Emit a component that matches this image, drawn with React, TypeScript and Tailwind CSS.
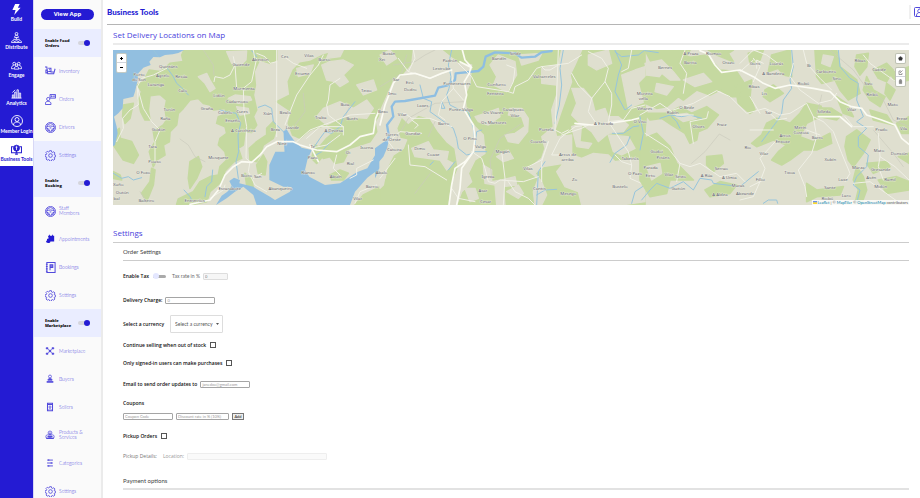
import type { ReactNode } from "react";
import clsx from "clsx";

type Label = [number, number, string];

type Tile = {
  x: number;
  y: number;
  green: string;
  beige: string;
  water: string;
  rivers: string;
  wideRiver: string;
  lines: string;
  roads: string;
  mainRoads: string;
  labels: Label[];
};

const tiles: Tile[] = [
  {
    x: -9,
    y: -15,
    green:
      "M222 15H440L446 50 432 80 436 120 430 150 440 195 430 215 440 240 425 262 405 260 400 300 385 310 395 340 372 350 345 378 335 410 300 440 290 470 240 480 200 478 205 462 250 440 270 410 300 395 325 390 330 365 350 345 345 320 325 300 330 280 350 265 345 245 320 235 325 215 350 205 345 190 310 195 300 180 280 175 265 160 240 165 220 190 205 205 200 240 180 260 178 290 160 300 165 330 140 345 130 365 118 320 135 290 130 260 160 240 170 225 165 190 170 165 150 148 120 152 115 195 120 225 105 225 92 200 85 165 95 140 82 120 100 110 118 75 150 80 165 70 180 55 220 50 215 30ZM440 15H500L500 45 480 55 450 45ZM500 170L540 150 535 110 550 75 570 55 600 50 640 30 700 15H810V205L795 230 800 260 780 290 720 310 680 330 640 340 625 310 650 280 680 255 650 240 600 255 570 280 548 270 535 235 545 200ZM418 310L440 290 470 270 470 250 490 230 500 250 490 280 460 300 450 330 440 350 420 345ZM440 360L460 330 470 350 465 390 445 385ZM15 260L28 250 30 280 65 290 85 330 70 355 40 345 10 300ZM40 180L70 175 60 220 45 235 38 215ZM95 445L120 410 125 370 135 375 130 420 110 470ZM240 350L265 335 275 365 260 400 240 430 235 400ZM660 390L690 375 715 385 700 405 665 405ZM810 425V480H735L760 450ZM10 380L30 390 35 405 10 400ZM615 300L650 320 620 355 605 340ZM405 385L425 400 430 430 410 420ZM660 335L715 320 700 350 675 355Z",
    beige:
      "M265 95L290 85 300 105 315 130 300 140 285 115ZM350 20L410 18 408 45 390 62 365 55ZM635 60L660 50 700 45 730 60 700 90 715 110 690 125 675 110 650 105ZM640 190L690 170 730 190 770 165 790 190 770 220 700 215 650 240 620 215ZM355 160L375 150 420 155 425 165 385 175ZM380 185L415 190 418 205 390 210ZM560 70L610 60 600 85 565 95ZM660 15L700 15 690 35 650 40ZM740 120L790 105 800 135 760 150Z",
    water:
      "M0 15H222L205 24 188 28 165 30 150 37 130 36 118 50 122 60 100 68 85 85 82 110 75 140 70 155 40 162 38 190 25 205 12 215 20 245 23 265 15 300 0 310ZM318 480L335 452 352 440 365 422 358 408 372 398 390 405 388 415 430 425 440 432 480 455 495 465 540 440 545 426 520 425 478 405 478 360 496 320 527 320 530 290 524 262 528 250 540 270 555 290 575 308 605 315 592 345 585 375 598 395 645 420 690 415 740 382 772 370 810 305V370L772 398 735 440 720 480H440L430 450 400 425 375 440 350 460Z",
    rivers:
      "M130 15L145 35M172 70L190 95 200 115 215 128 235 150M330 195L350 200 378 205 392 235 384 270 386 320 378 350 385 400M445 187L465 180 485 190 490 230 510 250 525 265M735 170L700 215 690 245 665 265 645 260 630 280 610 310M662 290L635 320 618 330M10 385L35 400 55 395 70 405 95 398M308 375L305 410 290 425 285 455M222 435L240 455 248 470M810 330L800 360M425 17L440 35",
    wideRiver: "M527 320L524 260",
    lines:
      "M210 282L235 300 255 335 285 350M280 15L310 60 312 90M580 145L585 200 555 240M720 180L700 230M90 440L110 470",
    roads:
      "M170 70L130 90 95 100 82 125 85 180 60 195 38 220 40 250 20 290M82 125L100 190 125 230 150 255 135 290 135 350M312 110L315 95 340 100 360 90 375 60 370 35M440 40L425 110 400 130 402 200 410 245 408 340 420 350M500 15V275M500 50L480 55 465 35 440 25M625 60L600 90 560 150 540 200 525 240M640 30L625 60M515 30L550 55 590 70M690 100L660 120 655 165 650 180 655 210 700 245 700 270M560 290L600 255 720 210 795 205M600 310L650 300 690 270M680 330L670 370 690 390M420 350L415 380 435 420 470 440M430 400L455 385M700 245L630 245 590 280M800 420L750 440 735 475M720 400L740 390 740 370 790 345M430 15L435 45M375 60L380 130 405 135M300 460L340 435 345 420",
    mainRoads:
      "M240 478L300 465 325 435 345 390 370 365 395 350 425 352 450 330 470 305 500 290 550 290 570 300 620 315 680 320 720 300 750 275 790 265 797 220 810 190M600 300L625 350",
    labels: [
      [175, 70, "Quintáns"], [87, 93, "Porto"], [87, 108, "do Son"], [158, 97, "Agrelo"], [214, 99, "Resúa"],
      [138, 123, "Laranga"], [218, 140, "Calo"], [327, 155, "Lidón"], [402, 136, "Mormenta"], [381, 175, "Cadarnoxo"],
      [291, 194, "Graña"], [178, 199, "Torón"], [166, 226, "Raña"], [146, 258, "Godón"], [345, 207, "Cubelo"],
      [396, 203, "Cures"], [368, 232, "Enseño"], [400, 261, "A Curicheira"], [128, 308, "Tara"], [134, 354, "Pouso"],
      [325, 342, "Mosquete"], [100, 388, "O Foxo"], [25, 424, "Xuño"], [37, 446, "Outón"], [20, 466, "bal"],
      [109, 472, "Balteiro"], [254, 471, "Entrerríos"], [359, 435, "Escarabote"], [409, 395, "Boiro"], [443, 398, "San"],
      [511, 434, "Abanqueiro"], [393, 62, "Guiende"], [451, 48, "Abeixón"], [524, 40, "Ces"], [597, 35, "Vilas"],
      [643, 49, "Burso"], [577, 90, "Eriume"], [769, 140, "Teixo"], [705, 183, "Buia"], [473, 210, "Xián"],
      [526, 206, "Bealo"], [632, 221, "Traba"], [726, 225, "Burés"], [496, 257, "Brea"], [547, 251, "Luvide"],
      [671, 262, "A Devesa"], [516, 300, "Nine"], [608, 308, "Te"], [608, 343, "Pazo"], [770, 313, "Isorna"],
      [714, 328, "Oi"], [721, 361, "Rial"], [594, 386, "Rianxo"], [677, 398, "Abuín"], [786, 430, "Barrio"], [743, 464, "Vilar"],
    ],
  },
  {
    x: 786,
    y: -15,
    green:
      "M15 15H810V480H15V430L35 400 45 340 25 310 15 200Z",
    beige:
      "M15 200L55 110 85 90 110 60 115 15H200L250 55 290 60 285 115 270 150 275 210 300 245 325 270 330 325 300 345 280 385 290 410 260 440 245 480H222L230 420 250 370 240 310 215 290 190 260 165 220 130 210 100 235 80 215 65 250 75 280 95 285 85 310 55 330 35 370 25 420 15 430 15 290ZM345 60L370 30 420 50 425 90 395 140 355 120 365 95ZM500 70L550 60 560 15H620L600 60 585 90 590 110 555 210 540 255 545 275 590 270 590 330 620 340 655 325 700 330 720 350 780 340 810 360V470L740 480H620L610 440 570 425 545 380 565 355 505 365 480 385 500 410 515 450 500 480H480L475 440 490 400 455 375 500 340 510 310 500 275 535 245 530 195 545 150 545 120 500 115ZM390 270L420 265 450 245 440 215 400 210 405 190 440 190 460 220 458 260 430 295 400 290ZM590 130L625 130 650 160 660 200 690 190 700 215 730 215 760 240 745 260 700 265 670 290 650 260 610 230 590 210 605 175ZM590 245L620 235 615 290 650 295 640 310 605 305ZM640 30L700 15 710 55 665 75 640 60ZM740 90L780 75 810 65V170L760 190 750 140ZM330 205L370 190 375 215 340 240 310 230 300 215ZM365 335L400 315 415 340 385 350ZM325 360L350 375 350 410 380 405 420 395 425 420 385 425 390 480H365L360 420 330 415ZM110 310L160 290 175 315 220 320 215 345 235 355 215 375 195 345 120 335ZM15 30L45 15 65 40 35 60ZM430 30L500 25 490 45 440 60ZM270 430L300 430 310 460 285 470ZM700 270L760 275 780 310 740 330 715 320ZM395 440L430 420 445 445 430 460Z",
    water:
      "M0 310L25 292 42 285 36 310 25 335 12 350 10 380 0 400Z",
    rivers:
      "M230 15L220 60 228 95 222 130 215 150 225 180 255 195 280 200 295 250 300 290M135 120L145 160 170 170 165 200 200 225 235 250 245 280 250 310 275 330 295 325M320 255L305 260 300 300M200 170L210 190 200 190ZM565 15L555 70 560 120 553 180 540 235M720 15L740 60 730 90 720 140 750 195 770 180M810 15L790 30 740 35 720 20M712 265L745 265 775 245 810 240M510 350L490 380 485 480M485 450L510 435 545 433M705 352L720 325 755 300 765 275M810 420L780 440 770 475M220 375L240 350M175 350L165 360M335 320L300 320",
    wideRiver:
      "M30 295L42 275 36 240 55 215 50 185 60 170 90 168 180 152 190 128 215 122 240 105 242 85 310 78 325 65 332 35 360 22 420 25 440 38 480 35 500 22 530 18",
    lines:
      "M55 60L85 55 120 50 150 30 180 15M15 125L80 85 95 30M350 400L345 345 375 280 440 235M170 380L120 445M265 170L180 175 100 220 60 290M180 230L160 275",
    roads:
      "M250 55L290 95 305 125 400 140 415 145 420 125 460 105 485 70 500 65 510 75 525 75 550 60M395 60L420 70 415 110 400 140M70 40L100 80 165 100 230 75M230 75L235 130 200 170 190 210 210 225M235 130L265 165M110 225L130 240 120 250M70 210L90 205 110 220 165 220 230 245M55 310L40 290 75 260 140 265M100 300L105 360 150 365 215 405M15 400L60 340M290 320L320 340 330 370 340 410 360 415 375 405 445 410 490 395M380 320L390 400 385 480M400 410L420 440 460 460 480 480M540 255L545 150 550 15M540 255L560 265 570 260 580 255M500 65L580 55 620 30M590 85L610 120 650 160 690 110 700 70 680 40 640 20M690 110L710 145 710 180 700 230M650 160L640 200 660 230M640 240L600 245 555 280 530 330 600 330M700 230L720 260 760 320 770 360M520 290L500 350 500 410M520 290L500 345 450 370M720 330L740 350 770 360 765 400 810 420M700 230L745 225 770 190 810 180M640 240L620 250 560 270M770 15L760 70 740 80M230 430L250 460 300 470M115 15L120 40 100 80",
    mainRoads:
      "M15 240L30 180 55 115 75 90 120 85 165 100 200 85 230 75M262 15L270 45 288 65 283 85 268 110 275 150 265 190 295 240 300 280 295 320 270 350 240 370 230 420 222 480M295 320L260 370 255 430 245 480M255 50L290 68M600 235L650 240 700 235 770 225 810 215",
    labels: [
      [42, 29, "Buxán"], [21, 47, "Xei"], [225, 52, "Padrón"], [200, 76, "Lestrobe"], [372, 45, "Bandín"], [421, 30, "Sinde"],
      [64, 108, "Sar"], [104, 116, "Eiró"], [106, 138, "Dodro"], [52, 151, "Imo"], [246, 120, "Pontecesures"],
      [365, 124, "Confurco"], [361, 151, "Fenteira"], [508, 100, "Valcarceles"], [143, 186, "Laxes"], [24, 204, "Bexo"],
      [82, 212, "Vilar"], [258, 197, "Ponte Valga"], [355, 207, "Os Viiares"], [415, 199, "Casalpuxo"], [420, 217, "Vilar"],
      [356, 238, "Os Martores"], [206, 240, "Barro"], [514, 259, "Portela"], [686, 241, "A Estrada"], [795, 235, "O Viso"],
      [114, 271, "Gondar"], [50, 274, "Torres"], [50, 289, "de Oeste"], [285, 284, "O Pino"], [317, 308, "Valga"],
      [58, 317, "Catoira"], [134, 316, "Dimo"], [175, 332, "Coaxe"], [383, 324, "Magán"], [490, 294, "Couselo"],
      [578, 332, "Arcos de"], [578, 347, "arriba"], [765, 344, "Tabeirós"], [459, 374, "Vilas"], [20, 388, "Abalo"],
      [780, 389, "O Pazo"], [339, 399, "Igrexa"], [599, 409, "Zo"], [735, 429, "Bustelo"], [493, 436, "Cuntis"],
      [324, 442, "Asar"], [580, 450, "Mesego"], [332, 475, "Cesar"],
    ],
  },
  {
    x: 1581,
    y: -150,
    green:
      "M15 150H150L135 175 165 170 200 165 240 210 290 215 310 245 300 290 270 290 240 270 210 285 170 270 130 300 115 290 80 320 50 325 15 310 0 250 20 230 60 235 75 215 40 200ZM110 175L130 165 175 180 160 210 120 200ZM205 150L230 165 280 185 265 160 280 150ZM285 260L335 240 330 290 345 330 330 340 295 310ZM375 270L400 255 430 280 390 305 370 290ZM395 165L450 150 455 230 430 225 415 205 385 215 390 190ZM525 150H590L600 200 650 240 660 280 625 300 600 270 585 240 545 250 530 230ZM500 310L575 325 605 345 590 360 540 350 500 370 480 410 520 425 570 400 575 430 530 450 490 450 450 480 425 495 395 480 415 455 440 435 400 420 350 440 335 430 365 405 380 370 410 355 450 370 480 340ZM85 340L120 320 155 340 200 320 235 345 200 385 175 395 170 420 150 430 135 400 95 375 65 355 30 360 15 340ZM0 420L50 400 90 440 110 490 160 540 90 540 80 580 30 590 0 540ZM200 470L245 465 250 490 220 515 200 495ZM195 570L240 545 290 555 270 580 210 590ZM650 165L685 160 680 200 660 225 645 200ZM700 210L740 190 760 210 740 245 715 235ZM680 230L700 270 735 290 720 320 690 300 670 270ZM620 410L650 390 690 420 670 460 640 500 625 480 615 440ZM650 500L670 530 680 570 665 610H645L655 570 640 540ZM680 490L740 485 750 500 700 520ZM715 540L770 530 807 545V570L740 580ZM775 470L807 460V490ZM750 220L807 200V240L770 250ZM690 330L740 345 760 375 700 360ZM500 550L530 570 610 560 600 585 530 590 500 605ZM325 160L370 150 360 180 330 190ZM590 290L620 310 640 350 610 340ZM770 370L807 350V400L785 400ZM0 330L20 335 15 390 0 400ZM740 250L765 270 750 300 735 280Z",
    beige:
      "M15 190L65 180 100 215 120 240 90 240 60 215 20 215ZM130 240L190 220 215 245 165 260ZM100 345L140 340 170 355 130 365ZM540 290H570V320H548ZM20 500L60 490 65 520 35 540ZM550 165L580 170 570 200 545 190ZM50 250L100 260 80 285 45 275Z",
    water: "",
    rivers:
      "M15 152L55 158M60 355L90 345 125 350 150 345 185 355M95 350L110 365 120 385M455 150L460 200 450 240 455 265 430 300 425 340 410 365 365 425M595 150L600 200 630 235 655 250 650 300 670 350 650 365 680 385 655 410 655 440 685 465 680 500 650 530 640 555 660 570 650 610M5 600L30 570 50 550 90 565 130 545 160 570 180 535 215 540 220 550 300 560 330 535 355 515M0 350L10 400 0 450M370 610L385 600 410 600 413 610",
    wideRiver: "",
    lines:
      "M270 420L238 402 195 455 155 490M570 150L640 210 680 265 730 300 760 360 807 380M700 390L760 460 790 500M545 285L530 350",
    roads:
      "M100 330L160 310 230 272 270 290 320 340 375 325 420 345 450 340 500 310 520 350 550 365M380 330L410 360 440 355M460 190L450 230 480 270 535 310 575 300 590 280M490 150L500 190 540 235 575 270M340 175L360 200 340 245M300 190L340 150 380 165 420 195M300 215L340 180M135 150L120 190 140 220 130 280M15 400L85 445 120 490 150 500 180 490 240 530 290 520 315 545M160 430L150 365 200 355 205 335M410 420L360 475 375 505 360 545 340 590 300 600M550 365L580 395 605 460 630 520 615 545M520 350L530 410 515 460 475 510 495 560 500 590M615 350L640 380 700 380M715 400L720 470 715 500 730 540M720 470L765 500 807 540M330 390H400M120 490L110 545M640 550L690 545 780 610M670 165L690 190 760 240 790 260M0 345L60 310 110 345 160 345M330 290L360 340M500 390L540 405M350 205L350 180 370 190M330 560L370 540",
    mainRoads:
      "M180 152L205 162 225 195 245 217 300 210 340 230 370 250 405 265 450 255 520 265 570 275 600 305 635 320 665 325 680 345 725 360 765 375 785 415 807 433M570 275L585 290M535 350L600 350 635 380",
    labels: [
      [153, 164, "A Praza"], [221, 164, "Riomao"], [151, 193, "Barcia"], [75, 207, "Bernes"], [265, 191, "Orazo"],
      [345, 195, "Goris"], [409, 194, "Lourás"], [507, 202, "Bi"], [400, 225, "A Bandeira"], [558, 220, "Carboeiro"],
      [591, 240, "Sino"], [660, 186, "Ribas"], [717, 213, "Caxide"], [685, 254, "Sizo"], [342, 265, "Ribas"],
      [373, 285, "Lis"], [490, 256, "Riobó"], [696, 287, "Reibó"], [14, 284, "Moreira"], [10, 299, "vella"],
      [14, 329, "Viñares"], [98, 341, "Rubín"], [140, 328, "O Bede"], [386, 342, "Sar"], [552, 340, "Silleda"],
      [635, 333, "Vilar"], [758, 319, "Mato"], [786, 360, "Erexe"], [175, 384, "Olives"], [245, 379, "Fraiz"],
      [481, 387, "Merín"], [483, 403, "Costoia"], [435, 411, "Arcos"], [428, 430, "Enxoxe"], [532, 416, "Barro"],
      [724, 393, "Prado"], [791, 389, "Vila"], [323, 447, "Rio"], [372, 465, "Vilar"], [571, 483, "Xubín"],
      [717, 456, "Mato"], [778, 465, "Donsión"], [50, 458, "Godoi"], [69, 477, "Picáns"], [32, 506, "Parada"],
      [31, 531, "Eirto"], [87, 529, "Vilar"], [122, 535, "Sesto"], [244, 509, "Serrao"], [200, 532, "A Rúa"],
      [268, 538, "A Umia"], [449, 521, "Tixoa"], [361, 542, "Filloi"], [294, 562, "Muras"], [115, 569, "Guitón"],
      [655, 506, "Marza"], [722, 512, "Gresande"], [694, 536, "Asén"], [750, 542, "Ramil"], [609, 542, "Laxe"],
      [722, 565, "Midón"], [570, 566, "Sante"], [619, 591, "Laro"], [240, 589, "A Aldea"], [315, 584, "Abeande"],
      [562, 599, "Riobó"],
    ],
  },
];

const DeliveryMap = () => {
  return (
    <div className="relative h-[155px] w-full overflow-hidden bg-[#dfdfcf]">
      <svg
        viewBox="0 0 2388 465"
        preserveAspectRatio="xMidYMid slice"
        className="block h-full w-full"
        role="img"
        aria-label="Delivery map"
      >
        {tiles.map((t) => (
          <g key={t.x} transform={`translate(${t.x} ${t.y})`} fill="none" strokeLinejoin="round" strokeLinecap="round">
            <path d={t.green} fill="#c5d9a0" stroke="#c5d9a0" strokeWidth="5" />
            <path d={t.beige} fill="#dfdfcf" stroke="#dfdfcf" strokeWidth="4" />
            <path d={t.water} fill="#92bfe0" />
            <path d={t.lines} stroke="#cacabc" strokeWidth="2" />
            <path d={t.rivers} stroke="#97c5dc" strokeWidth="3" />
            <path d={t.wideRiver} stroke="#8ebee2" strokeWidth="7" />
            <path d={t.roads} stroke="#f0f0e6" strokeWidth="3" />
            <path d={t.mainRoads} stroke="#fbfbf3" strokeWidth="5" />
          </g>
        ))}
        {tiles.map((t) => (
          <g
            key={t.x}
            transform={`translate(${t.x} ${t.y})`}
            className="font-['Noto_Sans',sans-serif] text-[13px]"
            fill="#5d6068"
            stroke="#eeeee4"
            strokeWidth="2"
            paintOrder="stroke"
            textAnchor="middle"
          >
            {t.labels.map(([x, y, name]) => (
              <text key={`${x}-${y}`} x={x} y={y}>
                {name}
              </text>
            ))}
          </g>
        ))}
      </svg>

      {/* zoom */}
      <div className="absolute left-1 top-1 flex w-[9px] flex-col divide-y divide-gray-300 rounded-[1px] bg-white shadow-[0_0_0_1px_#c4cbc4]">
        <button className="flex h-[9px] items-center justify-center" aria-label="Zoom in">
          <svg viewBox="0 0 9 9" className="size-[9px]"><path d="M4.5 3v3M3 4.5h3" stroke="#000" /></svg>
        </button>
        <button className="flex h-[9px] items-center justify-center" aria-label="Zoom out">
          <svg viewBox="0 0 9 9" className="size-[9px]"><path d="M3 4.5h3" stroke="#000" /></svg>
        </button>
      </div>

      {/* draw tools */}
      <div className="absolute right-1 top-1 flex w-[9px] flex-col gap-[5px]">
        <button className="h-[9px] rounded-[1px] bg-white shadow-[0_0_0_1px_#bfc2b4]" aria-label="Draw a polygon">
          <svg viewBox="0 0 9 9" className="size-[9px]"><path d="M4.5 2.5l2 1.4-.7 2.4H3.2l-.7-2.4z" fill="#333" stroke="#333" strokeWidth=".4" /></svg>
        </button>
        <div className="flex flex-col divide-y divide-gray-300 rounded-[1px] bg-white shadow-[0_0_0_1px_#bfc2b4]">
          <button className="h-[9px]" aria-label="Edit layers">
            <svg viewBox="0 0 9 9" className="size-[9px]" fill="none" stroke="#777" strokeWidth=".7"><path d="M5 3H3v3.5h3V5M4 5l2.5-2.5" /></svg>
          </button>
          <button className="h-[9px]" aria-label="Delete layers">
            <svg viewBox="0 0 9 9" className="size-[9px]" fill="#888" stroke="#777" strokeWidth=".6"><path d="M3 3h3M3.3 3.6h2.4v3H3.3zM4 2.5h1" /></svg>
          </button>
        </div>
      </div>

      {/* attribution */}
      <div className="absolute bottom-0 right-0 flex items-center gap-[1px] bg-white/80 px-[1px] text-[4px] leading-[5px] text-[#555]">
        <svg viewBox="0 0 12 8" className="h-[3px] w-1"><path fill="#4C7BE1" d="M0 0h12v4H0z" /><path fill="#FFD500" d="M0 4h12v4H0z" /></svg>
        <a href="#leaflet" className="text-[#0078a8]">Leaflet</a>
        <span>| ©</span>
        <a href="#maptiler" className="text-[#0078a8]">MapTiler</a>
        <span>©</span>
        <a href="#osm" className="text-[#0078a8]">OpenStreetMap</a>
        <span>contributors</span>
      </div>
    </div>
  );
};

const gear = (
  <>
    <circle cx="12" cy="12" r="4" />
    <path d="M10 2h4l.6 3 2 .9 2.600-1.600 2.600 2.700-1.600 2.600.8 2 3 .5v2.800l-3 .7-.9 2 1.600 2.600-2.700 2.600-2.500-1.600-2 .8-.5 3h-4l-.6-3-2-.8-2.500 1.600-2.700-2.700 1.600-2.500-.8-2-3-.6V11l3-.6.8-2-1.600-2.500 2.700-2.700 2.500 1.600 2-.8z" transform="translate(0 -.5)" />
  </>
);

const wheel = (
  <>
    <circle cx="12" cy="12" r="11" />
    <circle cx="12" cy="12" r="8.500" />
    <path d="M3.500 11c4-3 13-3 17 0M4 14c4 0 5 2 5.500 6M20 14c-4 0-5 2-5.500 6M10 13h4" strokeWidth="2" />
  </>
);

const icons: Record<string, ReactNode> = {
  build: <path d="M9 0h10l-4 8h6L7 24l3-11H3z" fill="currentColor" stroke="none" />,
  distribute: (
    <>
      <circle cx="12" cy="4" r="3" />
      <path d="M8 12c0-3 1-5 4-5s4 2 4 5zM12 12v3M5 16h14M1 23c0-3 1-4 3.500-4S8 20 8 23zM8.500 23c0-3 1-4 3.500-4s3.500 1 3.500 4zM16 23c0-3 1-4 3.500-4s3.500 1 3.500 4z" />
    </>
  ),
  engage: (
    <>
      <circle cx="7" cy="8" r="3" />
      <circle cx="17" cy="8" r="3" />
      <circle cx="12" cy="11" r="2.500" />
      <path d="M1 19c0-5 2-7 5-7M23 19c0-5-2-7-5-7M7 20c0-4 2-6 5-6s5 2 5 6zM1 19h5M18 19h5" />
    </>
  ),
  analytics: <path d="M1 22h22M3 22v-7h3v7M8 22V9h3v13M13 22V4h3v18M18 22V11h3v11M3 10l6-6" />,
  login: (
    <>
      <circle cx="12" cy="12" r="11" />
      <circle cx="12" cy="9" r="4" />
      <path d="M5 20c0-4 3-6 7-6s7 2 7 6" />
    </>
  ),
  tools: (
    <>
      <path d="M6 6H1v13h22V6h-5M9 22h6" strokeWidth="2.500" />
      <circle cx="12" cy="9" r="6.500" fill="currentColor" />
      <path d="M12 5v8M10 7h4" stroke="#fff" />
      <path d="M12 15v5" strokeWidth="3" />
    </>
  ),
  inventory: (
    <path d="M0 2h4l2 15h13l3-11M7 5h6v7H7M9 8h2M12 13h9M6 9H2v6h4" strokeWidth="2.200" />
  ),
  orders: (
    <>
      <circle cx="7" cy="11" r="3.500" />
      <path d="M1 23v-3c0-3 3-4 6-4s6 2 6 5v2zM11 1h12v8H11zM14 3v4M20 3v4M16 5h3" strokeWidth="2" />
    </>
  ),
  wheel,
  gear,
  appointments: <path d="M7 4h3V2h2v2h5V2h2v2h3v14h-9c0 4-7 5-10 2-1-2 0-4 2-5-1-3 1-5 4-4z" fill="currentColor" stroke="none" />,
  bookings: <path d="M4 1h18v22H4zM2 5h4M2 10h4M2 15h4M2 20h4M11 18V6h6v6h-6M11 9h6" strokeWidth="2.200" />,
  marketplace: (
    <>
      <path d="M5 5l14 14M19 5L5 19" strokeWidth="1.500" />
      <path d="M3 4h4v3H3zM17 4h4v3h-4zM3 17h4v3H3zM17 17h4v3h-4zM10 10h4v4h-4z" fill="currentColor" />
    </>
  ),
  buyers: (
    <>
      <circle cx="12" cy="6" r="3.500" />
      <path d="M7 15c0-3 2-4.500 5-4.500s5 1.500 5 4.500z" fill="currentColor" />
      <path d="M4 19h16" strokeWidth="4" />
    </>
  ),
  sellers: <><path d="M6 3h12v18H6zM6 6h12" strokeWidth="2.500" /><circle cx="12" cy="12" r="2.500" /><path d="M8 19l4-3 4 3" /></>,
  products: (
    <>
      <circle cx="12" cy="7" r="4.500" />
      <circle cx="6.500" cy="16" r="4.500" />
      <circle cx="17.500" cy="16" r="4.500" />
      <path d="M12 6v6M6 16h12M3 20h18" strokeWidth="3" />
    </>
  ),
  categories: <path d="M5 5h14M5 12h14M5 19h14M9 3v4M15 10v4M9 17v4" strokeWidth="2.200" />,
};

const Icon = ({ name, className }: { name: string; className?: string }) => (
  <svg viewBox="0 0 24 24" fill="none" stroke="currentColor" strokeWidth="1.8" className={clsx("shrink-0", className)}>
    {icons[name]}
  </svg>
);

const navItems = [
  ["build", "Build"],
  ["distribute", "Distribute"],
  ["engage", "Engage"],
  ["analytics", "Analytics"],
  ["login", "Member Login"],
  ["tools", "Business Tools"],
];

const MainNav = () => {
  return (
    <nav className="flex w-[34px] shrink-0 flex-col border-r border-[#d8d8f5] bg-[#241bd3] font-['Lato',sans-serif] text-[5px] font-bold leading-[6px]">
      {navItems.map(([icon, label], i) => (
        <a
          key={label}
          href={`#${icon}`}
          className={clsx(
            "flex shrink-0 flex-col items-center justify-end gap-[1px] whitespace-nowrap pb-1",
            i === 0 ? "h-[26px]" : "h-7",
            icon === "tools" ? "bg-white text-[#2b22d0]" : "text-white"
          )}
        >
          <Icon name={icon} className={icon === "login" ? "size-3" : "size-[11px]"} />
          {label}
        </a>
      ))}
    </nav>
  );
};

const Toggle = ({ label }: { label: string }) => {
  return (
    <label className="flex h-7 shrink-0 items-center justify-between bg-[#eaedff] px-[11px] font-['Open_Sans',sans-serif] text-[4px] font-extrabold leading-[5px] text-[#111]">
      <span className="w-[27px]">{label}</span>
      <input type="checkbox" role="switch" defaultChecked className="peer sr-only" />
      <span className="flex h-1 w-3 items-center justify-end rounded-full bg-[#d5d5dc]">
        <span className="size-[6px] shrink-0 rounded-full bg-[#241bd3]" />
      </span>
    </label>
  );
};

type ItemProps = { icon: string; label: string; active?: boolean };

const SideItem = ({ icon, label, active }: ItemProps) => {
  const small = ["marketplace", "buyers", "sellers", "products", "categories"].includes(icon);
  return (
    <a
      href={`#${label}`}
      className={clsx(
        "flex h-7 shrink-0 items-center gap-[3px] pl-[10px] text-[5px] font-light leading-[5px] text-[#4a42dc]",
        active && "bg-[#eaedff]"
      )}
    >
      <span className="flex w-3 justify-center">
        <Icon
          name={icon}
          className={clsx(
            small || icon === "appointments" ? "size-[10px]" : "size-[11px]",
            icon === "appointments" ? "text-[#241bd3]" : "text-[#5149dc]"
          )}
        />
      </span>
      <span className="max-w-[27px]">{label}</span>
    </a>
  );
};

const Sidebar = () => {
  return (
    <aside className="flex w-[69px] shrink-0 flex-col overflow-hidden border-r-2 border-[#ebebeb] bg-[#fafafa]">
      <div className="flex h-[29px] shrink-0 items-center px-[7px]">
        <button className="h-[11px] w-full rounded-full bg-[#241bd3] font-['Open_Sans',sans-serif] text-[6px] font-bold leading-[11px] text-white">
          View App
        </button>
      </div>
      <Toggle label="Enable Food Orders" />
      <SideItem icon="inventory" label="Inventory" />
      <SideItem icon="orders" label="Orders" />
      <SideItem icon="wheel" label="Drivers" />
      <SideItem icon="gear" label="Settings" active />
      <Toggle label="Enable Booking" />
      <SideItem icon="wheel" label="Staff Members" />
      <SideItem icon="appointments" label="Appointments" />
      <SideItem icon="bookings" label="Bookings" />
      <SideItem icon="gear" label="Settings" />
      <Toggle label="Enable Marketplace" />
      <SideItem icon="marketplace" label="Marketplace" />
      <SideItem icon="buyers" label="Buyers" />
      <SideItem icon="sellers" label="Sellers" />
      <SideItem icon="products" label="Products & Services" />
      <SideItem icon="categories" label="Categories" />
      <SideItem icon="gear" label="Settings" />
    </aside>
  );
};

const inputStyle = "h-[7px] rounded-[1px] border px-[1px] text-[4px] leading-[5px] text-[#777] placeholder:text-[#999]";
const enabledInput = "border-[#a5a5a5] bg-white font-['Lato',sans-serif] font-normal";

const CheckRow = ({ label, className }: { label: string; className?: string }) => (
  <label className={clsx("flex items-center gap-1", className)}>
    {label}
    <input type="checkbox" className="size-[6px] appearance-none border border-[#555] bg-white checked:bg-[#241bd3]" />
  </label>
);

const OrderSettings = () => {
  return (
    <form className="flex flex-col font-['Open_Sans',sans-serif] text-[5px] font-semibold leading-[6px] text-[#111]">
      <div className="flex h-[30px] items-center">
        <label className="flex items-center gap-1">
          Enable Tax
          <input type="checkbox" role="switch" className="peer sr-only" />
          <span className="flex h-[3px] w-[13px] items-center rounded-full bg-[#aaa]">
            <span className="size-[6px] shrink-0 rounded-full bg-[#e4e7ff]" />
          </span>
        </label>
        <label className="ml-[6px] flex items-center gap-[3px] font-['Lato',sans-serif] font-normal text-[#666]">
          Tax rate in %
          <input disabled defaultValue="0" className={clsx(inputStyle, "w-[25px] border-[#ddd] bg-[#f6f6f6]")} />
        </label>
      </div>
      <label className="mt-px flex h-4 items-center gap-[3px]">
        Delivery Charge:
        <input placeholder="0" className={clsx(inputStyle, enabledInput, "w-[50px]")} />
      </label>
      <div className="flex h-8 items-center gap-[6px]">
        <label htmlFor="currency">Select a currency</label>
        <span className="relative">
          <select
            id="currency"
            className="h-[18px] w-[53px] appearance-none rounded-[1px] border border-[#ddd] bg-white pl-1 font-['Lato',sans-serif] text-[5px] font-normal text-[#555]"
          >
            <option>Select a currency</option>
          </select>
          <svg viewBox="0 0 6 4" className="pointer-events-none absolute right-1 top-2 h-[2px] w-[3px]"><path d="M0 0h6L3 4z" fill="#555" /></svg>
        </span>
      </div>
      <CheckRow label="Continue selling when out of stock" className="h-[10px]" />
      <CheckRow label="Only signed-in users can make purchases" className="mt-2 h-[10px]" />
      <label className="mt-[11px] flex h-[10px] items-center gap-[3px]">
        Email to send order updates to
        <input type="email" placeholder="janedoe@gmail.com" className={clsx(inputStyle, enabledInput, "w-[50px]")} />
      </label>
      <p className="mt-[11px]">Coupons</p>
      <div className="mt-[7px] flex gap-[3px]">
        <input aria-label="Coupon code" placeholder="Coupon Code" className={clsx(inputStyle, enabledInput, "w-[50px]")} />
        <input aria-label="Discount rate" placeholder="Discount rate in % (10%)" className={clsx(inputStyle, enabledInput, "w-[53px]")} />
        <button type="button" className="h-[7px] w-3 border border-[#777] bg-[#eee] font-['Lato',sans-serif] text-[4px] font-normal leading-[5px]">
          Add
        </button>
      </div>
      <CheckRow label="Pickup Orders" className="mt-[11px] h-[10px]" />
      <div className="mt-[10px] flex h-[10px] items-center gap-[6px] font-normal text-[#777]">
        <span>Pickup Details:</span>
        <label className="flex items-center gap-[3px] text-[#999]">
          Location:
          <input disabled className={clsx(inputStyle, "w-[140px] border-[#eee] bg-[#fafafa]")} />
        </label>
      </div>
    </form>
  );
};

export default function App() {
  return (
    <div className="flex h-screen overflow-hidden bg-white font-['Lato',sans-serif]">
      <MainNav />
      <Sidebar />
      <main className="min-w-0 flex-1 pl-1">
        <header className="flex h-[25px] items-center justify-between border-b border-[#b5b5b5] pb-px">
          <h1 className="text-[8px] font-black leading-[10px] text-[#241bd3]">Business Tools</h1>
          <button className="flex h-[14px] items-center overflow-hidden border-l-2 border-[#f0f0f0] pl-[3px] text-[#5149dc]" aria-label="Account">
            <svg viewBox="0 0 12 20" className="h-[10px] w-[6px]" fill="none" stroke="currentColor" strokeWidth="2">
              <path d="M12 1H3Q1 1 1 3v14q0 2 2 2h9M5 18c0-5 2-7 7-7M9 11a4 4 0 0 1 3-7" />
            </svg>
          </button>
        </header>

        <div className="pl-[6px] pr-[11px]">
          <h2 className="flex h-5 items-center border-b-2 border-[#ebebeb] pt-[2px] font-['Open_Sans',sans-serif] text-[8px] leading-[10px] text-[#4a42dc]">
            Set Delivery Locations on Map
          </h2>
          <div className="pt-[5px]">
            <DeliveryMap />
          </div>

          <h2 className="mt-[19px] flex h-[19px] items-center border-b border-[#ccc] font-['Open_Sans',sans-serif] text-[8px] leading-[10px] text-[#4a42dc]">
            Settings
          </h2>
          <div className="pl-[10px]">
            <h3 className="flex h-[18px] items-center border-b border-[#ccc] text-[6px] leading-2 text-[#444]">Order Settings</h3>
            <OrderSettings />
            <h3 className="mt-3 flex h-[17px] items-center border-b-2 border-[#e2e2e2] text-[6px] leading-2 text-[#444]">
              Payment options
            </h3>
          </div>
        </div>
      </main>
    </div>
  );
}
